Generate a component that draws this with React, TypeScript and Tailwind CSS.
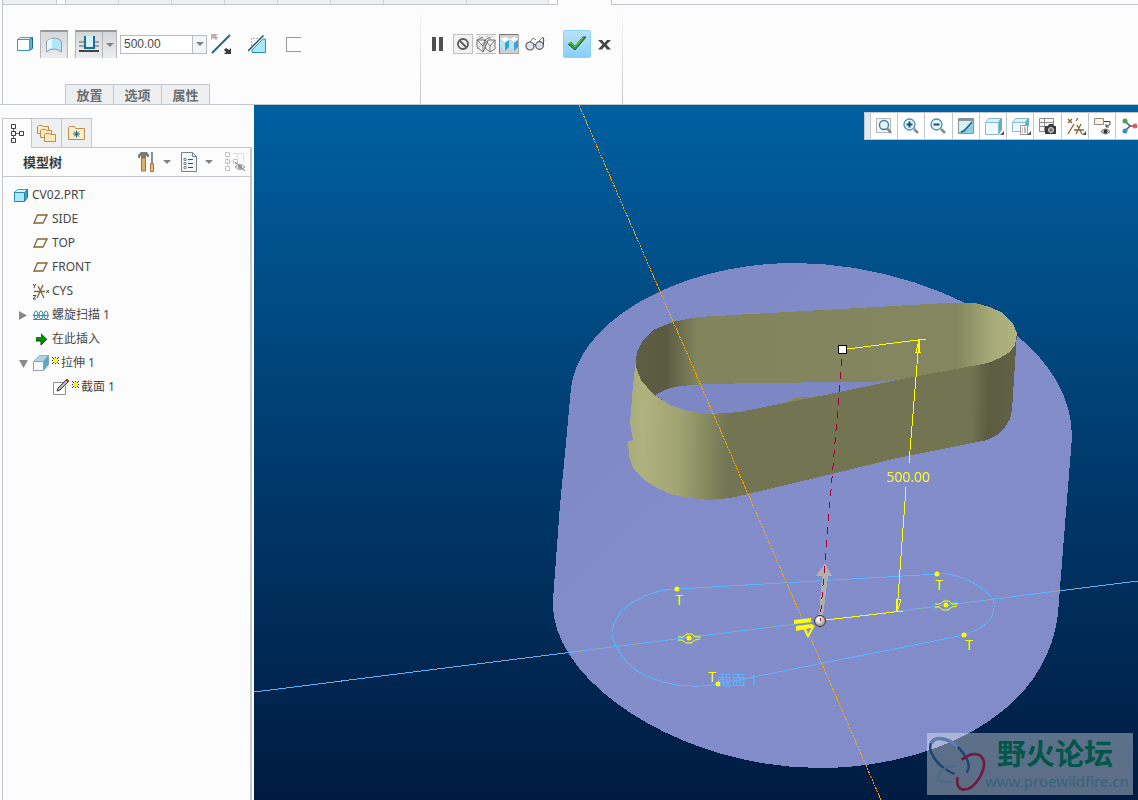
import type { ReactNode } from "react";

type Point = [number, number];

// Catmull-Rom through the points, written as cubic segments
const curve = (points: Point[]) => {
  const n = points.length;
  const at = (i: number) => points[Math.max(0, Math.min(n - 1, i))];
  let d = `M${points[0][0]} ${points[0][1]}`;
  for (let i = 0; i < n - 1; i++) {
    const [a, b, c, e] = [at(i - 1), at(i), at(i + 1), at(i + 2)];
    d += `C${b[0] + (c[0] - a[0]) / 6} ${b[1] + (c[1] - a[1]) / 6} ${c[0] - (e[0] - b[0]) / 6} ${
      c[1] - (e[1] - b[1]) / 6
    } ${c[0]} ${c[1]}`;
  }
  return d;
};

const poly = (points: Point[]) => points.map((p) => p.join(",")).join(" ");

const bodyOutline =
  "M571 388C579 320 680 263 795 263C915 263 1072 330 1072 437L1059 600C1056 715 930 768 820 768C680 768 548 680 553 600L560 505L566 443Z";

const nearRim: Point[] = [
  [1017, 333], [1015, 345], [1010, 352], [1000, 358], [988, 363], [940, 372], [897, 380], [830, 394],
  [785, 403], [740, 412], [725, 413], [710, 414], [687, 411], [670, 405], [653, 394], [641, 380],
  [636, 367], [636, 360],
];

const farRim: Point[] = [
  [637, 352], [642, 342], [653, 330], [673, 322], [687, 319], [698, 317], [840, 309], [947, 303],
  [975, 303], [990, 307], [1003, 313], [1013, 324], [1017, 333],
];

const outerWall: Point[] = [
  [636, 360], [633, 385], [630, 423], [633, 440], [628, 441], [629, 457], [633, 468], [643, 479],
  [657, 488], [673, 495], [690, 498], [710, 500], [730, 498], [748, 494], [840, 472], [897, 458],
  [987, 440], [997, 435], [1005, 427], [1010, 419], [1012, 410], [1017, 333],
];

const floorHole: Point[] = [
  [655, 395], [667, 389], [680, 386], [707, 384], [763, 383], [840, 382], [873, 382], [912, 378],
  [897, 380], [830, 394], [785, 403], [740, 412], [710, 414], [687, 411], [670, 405],
];

const sketchLeft: Point[] = [
  [677, 589], [660, 591], [643, 597], [625, 608], [615, 622], [612, 635], [617, 648], [633, 668],
  [657, 680], [677, 685], [700, 686], [718, 684],
];

const sketchRight: Point[] = [
  [938, 574], [947, 574], [963, 578], [980, 587], [992, 598], [994, 608], [990, 620], [980, 628], [964, 635],
];

const Eye = ({ x, y }: { x: number; y: number }) => (
  <g transform={`translate(${x} ${y})`} fill="none">
    <path d="M-2-6v3M2 3v3M-6 2l-6 1M6-2l6-1" stroke="#4cc3ff" />
    <path d="M-11 2h4l4 3h5l4-3 5-1M-11-1l5 0 4-3h5l3 3h6" stroke="#ffff00" />
    <circle r="2.5" fill="#ffff00" />
  </g>
);

const Scene = () => (
  <svg
    className="block h-full w-full"
    viewBox="254 105 884 695"
    preserveAspectRatio="xMidYMid slice"
    role="img"
    aria-label="CV02.PRT"
  >
    <defs>
      <linearGradient id="body" x1="0" y1="0" x2="1" y2="1">
        <stop offset="0" stopColor="#7e88c4" />
        <stop offset="0.5" stopColor="#828dca" />
        <stop offset="1" stopColor="#818bc7" />
      </linearGradient>
      <linearGradient id="inner" gradientUnits="userSpaceOnUse" x1="636" y1="0" x2="1017" y2="0">
        <stop offset="0" stopColor="#5d5d44" />
        <stop offset="0.08" stopColor="#5b5b42" />
        <stop offset="0.16" stopColor="#81845d" />
        <stop offset="0.84" stopColor="#83865e" />
        <stop offset="0.94" stopColor="#a9ac78" />
        <stop offset="1" stopColor="#b0b37e" />
      </linearGradient>
      <linearGradient id="outer" gradientUnits="userSpaceOnUse" x1="628" y1="0" x2="1017" y2="8">
        <stop offset="0" stopColor="#a5a874" />
        <stop offset="0.06" stopColor="#b0b37f" />
        <stop offset="0.15" stopColor="#a2a573" />
        <stop offset="0.28" stopColor="#737552" />
        <stop offset="0.9" stopColor="#737552" />
        <stop offset="0.95" stopColor="#5b5c41" />
        <stop offset="1" stopColor="#5f6044" />
      </linearGradient>
      <radialGradient id="ball" cx="0.4" cy="0.35">
        <stop offset="0.2" stopColor="#ffffff" />
        <stop offset="1" stopColor="#a9a9a9" />
      </radialGradient>
    </defs>

    <g shapeRendering="crispEdges">
      <path d={bodyOutline} fill="url(#body)" />
      <polygon points={poly([...farRim, ...nearRim])} fill="url(#inner)" />
      <polygon points={poly(floorHole)} fill="#7d87c3" />
      <polygon points="785,403 795,398 805,397 822,396 838,393" fill="#83865e" />
      <polygon points={poly([...nearRim, ...outerWall])} fill="url(#outer)" />
    </g>

    <g shapeRendering="crispEdges" fill="none">
      <path d="M254 692L1138 581" stroke="#5ab4ff" />
      <path d="M254 692L1138 581" stroke="#d99a3a" strokeDasharray="1 4 1 12" />
      <path d={curve(sketchLeft)} stroke="#5ab4ff" />
      <path d={curve(sketchRight)} stroke="#5ab4ff" />
      <path d="M677 589L938 574M718 684L964 635" stroke="#5ab4ff" />
      <path d="M579 105L881 800" stroke="#ffa500" strokeDasharray="2 1" />

      <path d="M847 349L926 339M919 340L909 463M906 487L897 612M826 620L903 611" stroke="#ffff00" />
      <path d="M919 340l-3 12h4zM897 612l-1-13h5l-1 4z" stroke="#ffff00" />
    </g>

    <path d="M825 563l7 13h-4l-5 40h-4l3-40h-6z" fill="#b0b0b0" shapeRendering="crispEdges" />
    <path d="M794 620l17-2v4l-17 2zM796 626l16-2 3 3-19 4z" fill="#ffff00" />
    <path d="M804 628l4 8 5-9" fill="none" stroke="#ffff00" strokeWidth="2" />
    <circle cx="820" cy="621" r="5.5" fill="url(#ball)" stroke="#333333" />
    <path
      d="M842 359L820 621"
      fill="none"
      stroke="#a00038"
      strokeDasharray="7 6"
      shapeRendering="crispEdges"
    />
    <rect x="838.5" y="345.5" width="8" height="8" fill="#ffffff" stroke="#000000" />

    <g fill="#ffff00">
      <circle cx="677" cy="589" r="2.5" />
      <circle cx="937" cy="574" r="2.5" />
      <circle cx="964" cy="635" r="2.5" />
      <circle cx="718" cy="684" r="2.5" />
    </g>
    <Eye x={689} y={638} />
    <Eye x={946} y={605} />

    <g
      fill="#ffff00"
      textAnchor="middle"
      className="font-['Open_Sans','Noto_Sans_CJK_SC',sans-serif] text-[14px]"
    >
      <text x="908" y="482">500.00</text>
      <text x="679" y="605">T</text>
      <text x="939" y="590">T</text>
      <text x="969" y="650">T</text>
      <text x="712" y="682">T</text>
    </g>
    <text
      x="718"
      y="685"
      fill="#5ab4ff"
      className="font-['Open_Sans','Noto_Sans_CJK_SC',sans-serif] text-[14px]"
    >
      截面 1
    </text>
  </svg>
);

const Icon = ({ w = 20, h = 20, children }: { w?: number; h?: number; children: ReactNode }) => (
  <svg width={w} height={h} viewBox={`0 0 ${w} ${h}`} fill="none" aria-hidden="true" className="shrink-0">
    {children}
  </svg>
);

const Caret = () => (
  <Icon w={8} h={4}>
    <path d="M0 0h8L4 4z" fill="#808080" />
  </Icon>
);

const SolidIcon = () => (
  <Icon w={16} h={16}>
    <path d="M.5 3.5l3-2h12l-3 2z" fill="#d8f4fc" stroke="#4a9ab8" />
    <path d="M12.5 3.5l3-2v11l-3 2z" fill="#5ab6d8" stroke="#1b6a8c" />
    <rect x=".5" y="3.5" width="12" height="11" fill="#ffffff" stroke="#3a9bc0" />
  </Icon>
);

const SurfaceIcon = () => (
  <Icon w={18} h={16}>
    <path d="M1.5 4q7.5-6 15 0v11q-7.5-6-15 0z" fill="#aee8fa" stroke="#999ea2" />
    <path d="M2 4q3-2 5-2.5v9q-3 .5-5 2.5z" fill="#e6f9fe" />
  </Icon>
);

const DepthIcon = () => (
  <Icon>
    <path d="M0 7h5M15 7h5M0 11h5M15 11h5" stroke="#a0a0a0" strokeWidth="2" />
    <path d="M0 16h20" stroke="#444444" strokeWidth="2" />
    <path d="M6 1h8v12H6z" fill="#d4f3fc" />
    <path d="M6 1v12h9V1" stroke="#1f6c90" strokeWidth="2" />
  </Icon>
);

const FlipIcon = () => (
  <Icon>
    <path d="M1 19L19 1" stroke="#22688a" strokeWidth="2" />
    <path d="M0 0h7L5 2l2 2-2 2-3-2-2 2z" fill="#b5b5b5" />
    <path d="M20 20h-7l2-2-2-2 2-2 3 2 2-2z" fill="#3c3c3c" />
  </Icon>
);

const CutIcon = () => (
  <Icon w={19} h={19}>
    <path d="M3.5 14V3.5H14" stroke="#aaaaaa" strokeDasharray="2 1" />
    <path d="M4 17.5V15L15 4h2.5v13.5z" fill="#a8e8fb" stroke="#3490b4" />
    <path d="M0 16L15.5.5" stroke="#164f73" strokeWidth="1.5" />
  </Icon>
);

const MeshIcon = () => (
  <Icon w={20} h={18}>
    <path
      d="M1 5l6-3M1 5h8l5-3M1 5v7l6 5M7 17v-6L1 5M7 11l2-6M9 5v8l-2 4M9 5l5 6M14 11v6M14 17l5-3V5M14 11l5-6h-7M12 5l-3 8 5 4"
      stroke="#555555"
      strokeWidth=".8"
    />
    <path d="M3 1l5 4M11 1l5 4M17 1l-6 5M1 14l8-8" stroke="#888888" strokeWidth=".8" strokeDasharray="2 1" />
  </Icon>
);

const ShadedIcon = () => (
  <Icon w={18} h={15}>
    <path d="M0 2l5-2 5 2-5 3zM10 2l4-2 4 2-4 3z" fill="#f8fdff" />
    <path d="M0 3l5 3v8l-5-4zM9 3l5 3v8l-5-4z" fill="#b5e6f6" />
    <path d="M9 3L5 6v8l4-4zM18 3l-4 3v8l4-4z" fill="#36a3d6" />
  </Icon>
);

const GlassesIcon = () => (
  <Icon w={20} h={14}>
    <path d="M5 5L8 1l3 2M14 4l4-4 1 4" stroke="#777777" />
    <circle cx="5" cy="9" r="4" fill="#dfe6ee" stroke="#555555" strokeWidth="1.2" />
    <circle cx="14.5" cy="8.5" r="3.8" fill="#dfe6ee" stroke="#555555" strokeWidth="1.2" />
    <path d="M9 8q1-2 2 0M18.5 8V1" stroke="#555555" />
  </Icon>
);

const CheckIcon = () => (
  <Icon w={20} h={16}>
    <path d="M1 8l3-2 4 4L16 1h3L8 14z" fill="#2b9a50" stroke="#1c5a2c" />
    <path d="M1 7.5l3-1 4 4L16 1.5" stroke="#a4e02c" />
  </Icon>
);

const HierarchyIcon = () => (
  <Icon w={14} h={20}>
    <path d="M2.5 5v9M5 9.5h3" stroke="#666666" />
    <path d="M.5.5h4v4h-4zM.5 7.5h4v4h-4zM.5 14.5h4v4h-4zM8.500 7.5h4v4h-4z" fill="#ffffff" stroke="#3c3c3c" />
  </Icon>
);

const FoldersIcon = () => (
  <Icon>
    {[
      [0, 1],
      [3, 5],
      [7, 9],
    ].map(([x, y]) => (
      <path
        key={x}
        transform={`translate(${x} ${y})`}
        d="M.5 9.5v-7l1-1h4l1 1h5v7z"
        fill="#fbe8bd"
        stroke="#b98f4e"
      />
    ))}
  </Icon>
);

const FavoritesIcon = () => (
  <Icon w={18} h={16}>
    <path d="M.5 14.5v-12l1-1h5l1 2h9v11z" fill="#fdeecb" stroke="#b98f4e" />
    <path d="M8.5 5.5v7M5 9h7M6 6.5l5 5M11 6.5l-5 5" stroke="#1e6080" />
  </Icon>
);

const ToolsIcon = () => (
  <Icon w={17} h={20}>
    <path d="M0 3l3-3h6l2 3v2H9V4H8v2H3V4H2v2H0z" fill="#77797d" />
    <path d="M3.500 6h4v13h-4z" fill="#dcae6a" stroke="#a87431" />
    <path d="M14 0v11" stroke="#8a8c90" strokeWidth="2" />
    <path d="M12.5 11.500h3v8h-3z" fill="#e8bc76" stroke="#a87431" />
  </Icon>
);

const ListIcon = () => (
  <Icon w={16} h={20}>
    <path d="M.5.5h11l4 4v15H.5z" fill="#f1f6f8" stroke="#7a8288" />
    <path d="M11.5.5v4h4" stroke="#7a8288" />
    <path d="M7 7.5h5M7 11.5h5M7 15.500h5" stroke="#4a4a4a" />
    <path d="M3 6.5h2v2H3zM3 10.5h2v2H3zM3 14.5h2v2H3z" stroke="#6b7378" strokeWidth=".8" />
  </Icon>
);

const HiddenTreeIcon = () => (
  <Icon w={21} h={20}>
    <path d="M2.5 5v9M5 9.5h3M8 1.5h10M12.5 2v5M18.5 2v8" stroke="#dcdcdc" />
    <path d="M.5.5h4v4h-4zM.5 7.5h4v4h-4zM.5 14.5h4v4h-4zM8.5 7.5h4v4h-4z" stroke="#c4c4c4" />
    <path d="M10 15q5-5 10 0-5 5-10 0z" fill="#e8e8e8" stroke="#9a9a9a" />
    <circle cx="15" cy="15" r="2" fill="#9a9a9a" />
    <path d="M10 10l10 9" stroke="#777777" />
  </Icon>
);

const PartIcon = () => (
  <Icon w={14} h={13}>
    <path d="M.5 3.5l3-3h10l-3 3z" fill="#d8f6fe" stroke="#3aa0c8" />
    <path d="M10.5 3.5l3-3v8l-3 4z" fill="#33a6d8" stroke="#1b7aa6" />
    <path d="M.5 3.5h10v9H.5z" fill="#a8eafc" stroke="#2c87ad" />
  </Icon>
);

const PlaneIcon = () => (
  <Icon w={15} h={10}>
    <path d="M4.5 1h9.5l-4 8H1z" stroke="#826432" strokeWidth="1.3" />
  </Icon>
);

const CsysIcon = () => (
  <Icon w={17} h={17}>
    <path d="M1 8.5h11M5 3l6 12M10 2L4 15" stroke="#826432" strokeWidth="1.3" />
    <path d="M0 1l1.500 2L3 1M1.500 3L1 5M13.500 7l2.500 3M16 7l-2.500 3M0 12.500h3l-3 3.500h3" stroke="#333333" strokeWidth=".9" />
  </Icon>
);

const HelixIcon = () => (
  <Icon w={16} h={10}>
    <ellipse cx="3" cy="5" rx="2" ry="4" stroke="#2f8bb0" />
    <ellipse cx="8" cy="5" rx="2" ry="4" stroke="#2f8bb0" />
    <ellipse cx="13" cy="5" rx="2" ry="4" stroke="#2f8bb0" />
    <path d="M0 5.500h16M0 9.500h16" stroke="#2f8bb0" />
  </Icon>
);

const InsertIcon = () => (
  <Icon w={11} h={12}>
    <path d="M0 4h5V0l6 6-6 6V8H0z" fill="#058a05" />
    <path d="M0 8h5v4l6-6" stroke="#034c03" />
  </Icon>
);

const ExtrudeIcon = () => (
  <Icon w={16} h={16}>
    <path d="M.5 6.5l6-6h9l-5 6z" fill="#a9d5e6" stroke="#8fb4c4" />
    <path d="M10.5 6.5l5-6v9l-5 6z" fill="#5aa4c4" stroke="#7ba6b8" />
    <path d="M.5 6.5h10v9H.5z" fill="#f8fafb" stroke="#9aa1a5" />
  </Icon>
);

const SketchIcon = () => (
  <Icon w={17} h={16}>
    <path d="M10 3.5H.5v12h12V7" fill="#ffffff" stroke="#909090" />
    <path d="M4 12l1-3 8-8 2 2-8 8z" fill="#b5b5b5" stroke="#3c3c3c" />
    <path d="M13 1l1-1 2 2-1 1z" fill="#d04a3c" stroke="#a03026" />
  </Icon>
);

const NewMark = () => (
  <Icon w={7} h={7}>
    <path d="M0 0l2 2M7 0L5 2M0 7l2-2M7 7L5 5M3.5 0v1M3.5 6v1M0 3.5h1M6 3.5h1" stroke="#333333" />
    <path d="M2 2h3v3H2z" fill="#ffff00" stroke="#f0e800" />
  </Icon>
);

const viewTools: { label: string; icon: ReactNode; menu?: boolean }[] = [
  {
    label: "重新调整",
    icon: (
      <Icon w={16} h={17}>
        <path d="M.5.5h14v14H.5z" fill="#f4f4f4" stroke="#b4b4b4" />
        <circle cx="8" cy="7" r="4.500" fill="#e4f5fa" stroke="#2f7f9f" strokeWidth="1.3" />
        <path d="M11 10l4 5" stroke="#888888" strokeWidth="2.5" />
      </Icon>
    ),
  },
  {
    label: "放大",
    icon: (
      <Icon w={17} h={16}>
        <circle cx="6.5" cy="6.5" r="5.5" fill="#e4f5fa" stroke="#4391ac" strokeWidth="1.3" />
        <path d="M3.5 6.5h6M6.5 3.5v6" stroke="#164f73" strokeWidth="2" />
        <path d="M11 11l4 4" stroke="#8a8a8a" strokeWidth="2.5" />
      </Icon>
    ),
  },
  {
    label: "缩小",
    icon: (
      <Icon w={17} h={16}>
        <circle cx="6.5" cy="6.5" r="5.5" fill="#e4f5fa" stroke="#4391ac" strokeWidth="1.3" />
        <path d="M3.5 6.5h6" stroke="#164f73" strokeWidth="2" />
        <path d="M11 11l4 4" stroke="#8a8a8a" strokeWidth="2.5" />
      </Icon>
    ),
  },
  {
    label: "重画",
    icon: (
      <Icon w={16} h={16}>
        <path d="M.5.5h15v15H.5z" fill="#8fcfe3" stroke="#8a9398" />
        <path d="M1 2h14" stroke="#8a9398" strokeWidth="2" />
        <path d="M1 3h13q-2 6-13 11z" fill="#d5f1f8" />
        <path d="M3 14l3-1 8-9" stroke="#1e6080" strokeWidth="1.5" />
      </Icon>
    ),
  },
  {
    label: "显示样式",
    menu: true,
    icon: (
      <Icon w={17} h={17}>
        <path d="M.5 4.5l3-4h13l-3 4z" fill="#d5f3fb" stroke="#86bccd" />
        <path d="M13.5 4.5l3-4v11l-3 5z" fill="#5ab0cf" stroke="#6aabc3" />
        <path d="M.5 4.5h13v12H.5z" fill="#eefafd" stroke="#86bccd" />
      </Icon>
    ),
  },
  {
    label: "已命名视图",
    menu: true,
    icon: (
      <Icon w={17} h={17}>
        <path d="M.5 4.5l3-4h13l-3 4z" fill="#d5f3fb" stroke="#86bccd" />
        <path d="M13.5 4.5l3-4v7l-3 5z" fill="#5ab0cf" stroke="#6aabc3" />
        <path d="M.5 4.5h13v9H.5z" fill="#eefafd" stroke="#86bccd" />
        <path d="M8.5 7.5h7v9h-7z" fill="#ffffff" stroke="#999999" />
        <path d="M10 10h1M12 10h2M10 12h1M12 12h2M10 14h1M12 14h2" stroke="#777777" />
      </Icon>
    ),
  },
  {
    label: "视图管理器",
    icon: (
      <Icon w={17} h={17}>
        <path d="M.5.5h14v13H.5zM1 4.5h13M1 8.5h13M5.5 1v12" fill="#f6f6f6" stroke="#8c8c8c" />
        <path d="M6 8h3l1-2h4l1 2h2v8H6z" fill="#3c3c3c" />
        <circle cx="12" cy="12" r="2.5" fill="#777777" stroke="#dddddd" />
      </Icon>
    ),
  },
  {
    label: "基准显示过滤器",
    menu: true,
    icon: (
      <Icon w={17} h={17}>
        <path d="M1 1l4 4M5 1L1 5M11 0L9 3M7 6L1 16M7 12h10M10 7l5 9M14 6l-5 10" stroke="#826432" strokeWidth="1.3" />
      </Icon>
    ),
  },
  {
    label: "注释显示",
    icon: (
      <Icon w={17} h={17}>
        <path d="M.5.5h9v6h-9z" fill="#fff2d2" stroke="#8c8c8c" />
        <path d="M10 3.5h6v3l-4 2M12 6v3h3" stroke="#444444" />
        <path d="M7 13.5q4.5-5 9 0-4.5 5-9 0z" fill="#dddddd" stroke="#666666" />
        <circle cx="11.5" cy="13.5" r="2" fill="#333333" />
      </Icon>
    ),
  },
];

const Toolbar = () => (
  <div className="absolute top-[7px] right-0 flex h-7 w-[274px] overflow-hidden border border-r-0 border-[#c3c7cb] bg-white">
    <div className="w-[5px] shrink-0 bg-[#e3e6ea]" />
    {viewTools.map(({ label, icon, menu }) => (
      <button
        key={label}
        aria-label={label}
        className="relative flex flex-1 items-center border-l border-[#c3c7cb] pl-[5px]"
      >
        {icon}
        {menu && (
          <span className="absolute right-0.5 bottom-1 border-b-4 border-l-4 border-b-[#555555] border-l-transparent" />
        )}
      </button>
    ))}
    <button aria-label="旋转中心" className="flex w-[23px] shrink-0 items-center border-l border-[#c3c7cb] pl-1.5">
      <Icon w={16} h={16}>
        <path d="M3 3l5 5M3 13l5-5M8 8h5" stroke="#555555" strokeWidth="1.5" />
        <circle cx="3" cy="3" r="2.5" fill="#4da050" />
        <circle cx="3" cy="13" r="2.5" fill="#3a8fb5" />
        <circle cx="13" cy="8" r="2.5" fill="#d86060" />
      </Icon>
    </button>
  </div>
);

const Watermark = () => (
  <div className="absolute right-[5px] bottom-[5px] flex h-[62px] w-[206px] bg-white/36">
    <div className="w-[58px] shrink-0">
      <svg width="62" height="62" viewBox="0 0 186 186" fill="none" aria-hidden="true">
        <path d="M82 123Q30 100 12 58Q2 20 34 17Q75 14 108 60Q135 95 119 119" stroke="#1c4370" strokeWidth="7" />
        <path d="M13 32Q20 12 50 18Q72 23 92 42" stroke="#5d7db0" strokeWidth="10" />
        <path d="M86 100Q62 96 42 114Q22 138 50 146Q62 149 76 146" stroke="#4a6a8c" strokeWidth="7" />
        <path d="M104 80Q138 54 160 68Q182 86 160 130Q136 172 108 170Q86 166 92 132" stroke="#6c1c40" strokeWidth="8" />
      </svg>
    </div>
    <div className="flex flex-col">
      <div className="pl-3 font-['Noto_Sans_CJK_SC',sans-serif] text-[29px] leading-[38px] font-bold whitespace-nowrap text-[#00564a]">
        野火论坛
      </div>
      <div className="font-['Noto_Sans',sans-serif] text-[15px] leading-5 whitespace-nowrap text-[#36647c]">
        www.proewildfire.cn
      </div>
    </div>
  </div>
);

const TabStrip = () => (
  <div className="flex h-[5px] shrink-0 pl-0.5">
    <div className="w-[55px] border-r border-b border-l border-[#c3c7cb] bg-[#eeeff1]" />
    <div className="w-2 border-b border-[#c3c7cb]" />
    <div className="flex border-b border-l border-[#c3c7cb] bg-[#eeeff1]">
      {["w-[53px]", "w-[53px]", "w-[53px]", "w-[53px]", "w-[53px]", "w-[53px]", "w-[83px]", "w-[82px]"].map((w, i) => (
        <div key={i} className={`${w} border-r border-[#d0d3d6]`} />
      ))}
    </div>
    <div className="w-[9px] border-r border-b border-[#c3c7cb]" />
    <div className="w-[53px]" />
    <div className="flex-1 border-b border-l border-[#c3c7cb]" />
  </div>
);

const Divider = () => <div className="w-px shrink-0 bg-linear-to-b from-[#fcfcfc] via-[#e0e2e4] to-[#c3c7cb]" />;

const Ribbon = () => (
  <header className="flex h-[100px] shrink-0 border-b border-[#c3c7cb]">
    <div className="ml-0.5 flex w-[418px] shrink-0 flex-col justify-between border-l border-[#c3c7cb]">
      <div className="mt-[25px] flex h-7 items-center pl-3.5">
        <button aria-label="拉伸为实体">
          <SolidIcon />
        </button>
        <button
          aria-label="拉伸为曲面"
          className="ml-[7px] flex h-7 w-7 items-center justify-center border border-t-2 border-b-0 border-[#b4b6b8] border-t-[#96989a] bg-linear-to-b from-[#d6d7da] to-[#ebecef]"
        >
          <SurfaceIcon />
        </button>
        <div className="ml-[7px] flex h-7 w-[42px] border border-t-2 border-b-0 border-[#b4b6b8] border-t-[#96989a] bg-linear-to-b from-[#d6d7da] to-[#ebecef]">
          <button aria-label="深度" className="flex flex-1 items-center justify-center border-r border-[#b4b6b8]">
            <DepthIcon />
          </button>
          <button aria-label="深度选项" className="flex w-[13px] items-center justify-center">
            <Caret />
          </button>
        </div>
        <div className="ml-[3px] flex h-[19px] w-[87px] border border-[#b9bcbf] bg-white">
          <input
            aria-label="深度值"
            defaultValue="500.00"
            className="w-0 flex-1 pl-[3px] font-['Liberation_Sans',Arial,sans-serif] text-[12px] leading-[17px] text-[#4a4a4a] outline-none"
          />
          <button
            aria-label="最近的值"
            className="flex w-3.5 items-center justify-center border-l border-[#b9bcbf] bg-[#f3f4f5]"
          >
            <Caret />
          </button>
        </div>
        <button aria-label="反向" className="ml-1">
          <FlipIcon />
        </button>
        <button aria-label="移除材料" className="ml-[17px]">
          <CutIcon />
        </button>
        <button aria-label="加厚草绘" className="ml-[19px] h-[15px] w-[15px] border border-r-0 border-[#96989a]" />
      </div>
      <div className="ml-[62px] flex h-5 self-start border-t border-l border-[#c3c7cb]">
        {["放置", "选项", "属性"].map((t) => (
          <button
            key={t}
            className="w-12 border-r border-[#c3c7cb] bg-[#eeeff1] font-['Noto_Sans_CJK_SC',sans-serif] text-[13px] leading-[19px] font-bold text-[#6b6d70]"
          >
            {t}
          </button>
        ))}
      </div>
    </div>
    <Divider />
    <div className="mt-[25px] flex h-7 w-[201px] shrink-0 items-center pl-[11px]">
      <button aria-label="暂停" className="flex gap-[3px]">
        <span className="h-3.5 w-1 bg-[#4f4f4f]" />
        <span className="h-3.5 w-1 bg-[#4f4f4f]" />
      </button>
      <button
        aria-label="无预览"
        className="ml-2.5 flex h-5 w-5 items-center justify-center border border-[#c0c0c0] bg-[#f2f2f2]"
      >
        <Icon w={12} h={12}>
          <circle cx="6" cy="6" r="5" stroke="#5a5a5a" strokeWidth="1.8" />
          <path d="M2.5 2.5l7 7" stroke="#5a5a5a" strokeWidth="1.8" />
        </Icon>
      </button>
      <button aria-label="分离" className="ml-[3px] h-5 w-5 border-y border-[#c0c0c0] bg-[#f2f2f2]">
        <MeshIcon />
      </button>
      <button
        aria-label="连接"
        className="ml-[3px] flex h-5 w-5 items-center justify-center border border-[#a8a8a8] border-t-[#777777] border-l-[#777777] bg-[#cfd0d2]"
      >
        <ShadedIcon />
      </button>
      <button aria-label="校验" className="ml-1.5">
        <GlassesIcon />
      </button>
      <button
        aria-label="确定"
        className="ml-[18px] flex h-7 w-7 items-center justify-center rounded-[2px] border border-[#8fd0f5] bg-linear-to-b from-[#b9e2fa] to-[#86cffb]"
      >
        <CheckIcon />
      </button>
      <button aria-label="取消" className="ml-[7px]">
        <Icon w={13} h={11}>
          <path d="M0 1h4l2.500 3L9 1h4L8.500 5.500l4.500 5H9l-2.500-3-2.500 3H0l4.500-5z" fill="#474747" />
        </Icon>
      </button>
    </div>
    <Divider />
  </header>
);

const rows: { label: string; icon: ReactNode; pad: string; arrow?: "right" | "down"; isNew?: boolean }[] = [
  { label: "CV02.PRT", icon: <PartIcon />, pad: "pl-[11px]" },
  { label: "SIDE", icon: <PlaneIcon />, pad: "pl-[30px]" },
  { label: "TOP", icon: <PlaneIcon />, pad: "pl-[30px]" },
  { label: "FRONT", icon: <PlaneIcon />, pad: "pl-[30px]" },
  { label: "CYS", icon: <CsysIcon />, pad: "pl-[30px]" },
  { label: "螺旋扫描 1", icon: <HelixIcon />, pad: "pl-4", arrow: "right" },
  { label: "在此插入", icon: <InsertIcon />, pad: "pl-8" },
  { label: "拉伸 1", icon: <ExtrudeIcon />, pad: "pl-4", arrow: "down", isNew: true },
  { label: "截面 1", icon: <SketchIcon />, pad: "pl-[50px]", isNew: true },
];

const ModelTree = () => (
  <ul className="pt-1.5 font-['Noto_Sans','Noto_Sans_CJK_SC',sans-serif] text-[12px] text-[#474747]">
    {rows.map(({ label, icon, pad, arrow, isNew }) => (
      <li key={label} className={`flex h-6 items-center ${pad}`}>
        {arrow && (
          <span className="flex w-3.5 shrink-0">
            <Icon w={9} h={9}>
              <path d={arrow === "right" ? "M0 0l8 4.5L0 9z" : "M0 1h9L4.5 9z"} fill="#8a8a8a" />
            </Icon>
          </span>
        )}
        <span className={label === "在此插入" ? "w-[17px] pl-px" : label === "CV02.PRT" ? "w-[18px]" : "w-[19px]"}>
          {icon}
        </span>
        {isNew && (
          <span className="mb-1.5 w-[9px] shrink-0">
            <NewMark />
          </span>
        )}
        <span>{label}</span>
      </li>
    ))}
  </ul>
);

const Sidebar = () => (
  <aside className="flex w-[254px] shrink-0 flex-col pt-[13px] pr-0.5 pl-0.5">
    <div className="flex h-[30px] shrink-0">
      <button
        aria-label="模型树"
        className="flex w-[30px] items-center justify-center border-t border-r border-l border-[#c3c7cb] pl-px"
      >
        <HierarchyIcon />
      </button>
      <button
        aria-label="文件夹浏览器"
        className="flex w-[30px] items-center justify-center border-t border-r border-b border-[#c3c7cb] bg-[#eeeff1] pl-px"
      >
        <FoldersIcon />
      </button>
      <button
        aria-label="收藏夹"
        className="flex w-[30px] items-center justify-center border-t border-r border-b border-[#c3c7cb] bg-[#eeeff1] pl-px"
      >
        <FavoritesIcon />
      </button>
      <div className="flex-1 border-b border-[#c3c7cb]" />
    </div>
    <div className="flex-1 border-r-2 border-l border-[#c3c7cb]">
      <div className="flex h-[29px] items-center border-b border-[#c3c7cb] pl-5">
        <h2 className="w-[115px] font-['Noto_Sans_CJK_SC',sans-serif] text-[13px] font-bold text-[#3c3c3c]">模型树</h2>
        <button aria-label="设置" className="flex items-center gap-2">
          <ToolsIcon />
          <Caret />
        </button>
        <button aria-label="显示" className="ml-2.5 flex items-center gap-2">
          <ListIcon />
          <Caret />
        </button>
        <button aria-label="隐藏" className="ml-3">
          <HiddenTreeIcon />
        </button>
      </div>
      <ModelTree />
    </div>
  </aside>
);

export default function App() {
  return (
    <div className="flex h-screen flex-col overflow-hidden bg-[#fcfcfc]">
      <TabStrip />
      <Ribbon />
      <div className="flex min-h-0 flex-1">
        <Sidebar />
        <main className="relative min-w-0 flex-1 bg-linear-to-b from-[#0060a0] to-[#001b41]">
          <Scene />
          <Toolbar />
          <Watermark />
        </main>
      </div>
    </div>
  );
}
